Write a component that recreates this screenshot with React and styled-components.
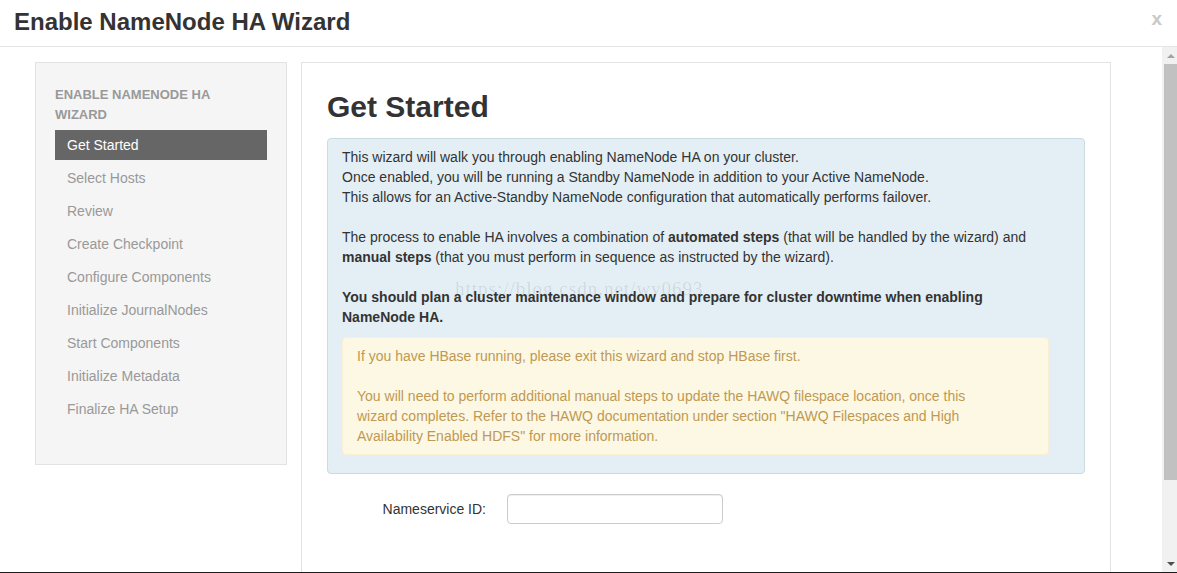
import React from 'react'
import styled, { createGlobalStyle } from 'styled-components'

const GlobalStyle = createGlobalStyle`
  html, body {
    margin: 0;
    padding: 0;
    background: #fff;
    overflow: hidden;
  }
  body {
    font-family: "Liberation Sans", Arial, Helvetica, sans-serif;
    font-size: 14px;
    line-height: 20px;
    color: #333;
  }
  * { box-sizing: border-box; }
`

const Modal = styled.div`
  width: 1177px;
  height: 573px;
  display: flex;
  flex-direction: column;
  border-bottom: 1px solid #1c1c1c;
  overflow: hidden;
`

const Header = styled.div`
  height: 47px;
  flex: none;
  display: flex;
  align-items: center;
  justify-content: space-between;
  padding: 0 15px 2px 14px;
  border-bottom: 1px solid #e5e5e5;
`

const Title = styled.h3`
  margin: 0;
  font-size: 24px;
  line-height: 30px;
  font-weight: bold;
  color: #333;
`

const Close = styled.span`
  font-size: 19px;
  font-weight: bold;
  color: #c9c9c9;
  line-height: 20px;
  margin-top: -6px;
`

const Body = styled.div`
  flex: 1;
  display: flex;
  min-height: 0;
`

const Content = styled.div`
  flex: 1;
  display: flex;
  align-items: flex-start;
  gap: 14px;
  padding: 15px 0 0 35px;
  position: relative;
`

const Sidebar = styled.div`
  width: 252px;
  flex: none;
  background: #f5f5f5;
  border: 1px solid #e3e3e3;
  padding: 22px 19px 37px 19px;
`

const SideHeader = styled.div`
  max-width: 180px;
  font-size: 13px;
  font-weight: bold;
  color: #999;
  text-transform: uppercase;
  line-height: 20px;
  margin-bottom: 5px;
`

const NavItem = styled.div`
  height: 30px;
  line-height: 30px;
  padding: 0 12px;
  margin-bottom: 3px;
  font-size: 14px;
  color: ${p => (p.$active ? '#fff' : '#999')};
  background: ${p => (p.$active ? '#666' : 'transparent')};
`

const Panel = styled.div`
  width: 810px;
  flex: none;
  height: 620px;
  background: #fff;
  border: 1px solid #e3e3e3;
  padding: 24px 25px 0 25px;
`

const Heading = styled.h2`
  margin: 0 0 11px;
  font-size: 30px;
  line-height: 40px;
  font-weight: bold;
  color: #333;
`

const Alert = styled.div`
  background: ${p => (p.$warning ? '#fcf8e3' : '#e4eff5')};
  border: 1px solid ${p => (p.$warning ? '#fbeed5' : '#c9dbe3')};
  border-radius: 4px;
  padding: ${p => (p.$warning ? '8px 60px 8px 14px' : '8px 35px 8px 14px')};
  color: ${p => (p.$warning ? '#c09853' : '#333')};
  margin-bottom: ${p => (p.$warning ? '10px' : '20px')};
`

const Para = styled.p`
  margin: 0 0 ${p => (p.$last ? '10px' : '20px')};
  &:last-child { margin-bottom: 0; }
`

const FormRow = styled.div`
  display: flex;
  align-items: center;
`

const Label = styled.label`
  width: 160px;
  text-align: right;
  padding-right: 1px;
  margin-right: 20px;
  color: #333;
`

const Input = styled.input`
  width: 216px;
  height: 30px;
  border: 1px solid #ccc;
  border-radius: 4px;
  box-shadow: inset 0 1px 1px rgba(0, 0, 0, 0.075);
  padding: 4px 6px;
  font-family: inherit;
  font-size: 14px;
`

const Watermark = styled.div`
  position: absolute;
  left: 455px;
  top: 232px;
  font-family: "Liberation Serif", "Times New Roman", serif;
  font-size: 19px;
  letter-spacing: 1px;
  color: rgba(0, 0, 0, 0.1);
  pointer-events: none;
`

const Scrollbar = styled.div`
  width: 15px;
  flex: none;
  background: #f1f1f1;
  display: flex;
  flex-direction: column;
  align-items: stretch;
`

const Arrow = styled.div`
  height: 17px;
  display: flex;
  align-items: center;
  justify-content: center;
  padding-left: 2px;
  &::after {
    content: '';
    width: 0;
    height: 0;
    border-left: 4px solid transparent;
    border-right: 4px solid transparent;
    ${p => (p.$down ? 'border-top: 4px solid #505050;' : 'border-bottom: 4px solid #a3a3a3;')}
  }
`

const Thumb = styled.div`
  height: 416px;
  margin-left: 2px;
  background: #c1c1c1;
`

const Track = styled.div`
  flex: 1;
`

const steps = [
  'Get Started',
  'Select Hosts',
  'Review',
  'Create Checkpoint',
  'Configure Components',
  'Initialize JournalNodes',
  'Start Components',
  'Initialize Metadata',
  'Finalize HA Setup',
]

export default function App() {
  return (
    <Modal>
      <GlobalStyle />
      <Header>
        <Title>Enable NameNode HA Wizard</Title>
        <Close>x</Close>
      </Header>
      <Body>
        <Content>
          <Sidebar>
            <SideHeader>Enable NameNode HA Wizard</SideHeader>
            {steps.map((s, i) => (
              <NavItem key={s} $active={i === 0}>{s}</NavItem>
            ))}
          </Sidebar>
          <Panel>
            <Heading>Get Started</Heading>
            <Alert>
              <Para>
                This wizard will walk you through enabling NameNode HA on your cluster.<br />
                Once enabled, you will be running a Standby NameNode in addition to your Active NameNode.<br />
                This allows for an Active-Standby NameNode configuration that automatically performs failover.
              </Para>
              <Para>
                The process to enable HA involves a combination of <b>automated steps</b> (that will be handled by the wizard) and <b>manual steps</b> (that you must perform in sequence as instructed by the wizard).
              </Para>
              <Para $last>
                <b>You should plan a cluster maintenance window and prepare for cluster downtime when enabling NameNode HA.</b>
              </Para>
              <Alert $warning>
                <Para>If you have HBase running, please exit this wizard and stop HBase first.</Para>
                <Para>
                  You will need to perform additional manual steps to update the HAWQ filespace location, once this wizard completes. Refer to the HAWQ documentation under section "HAWQ Filespaces and High Availability Enabled HDFS" for more information.
                </Para>
              </Alert>
            </Alert>
            <FormRow>
              <Label>Nameservice ID:</Label>
              <Input type="text" />
            </FormRow>
          </Panel>
          <Watermark>https://blog.csdn.net/wy0693</Watermark>
        </Content>
        <Scrollbar>
          <Arrow />
          <Thumb />
          <Track />
          <Arrow $down />
        </Scrollbar>
      </Body>
    </Modal>
  )
}
